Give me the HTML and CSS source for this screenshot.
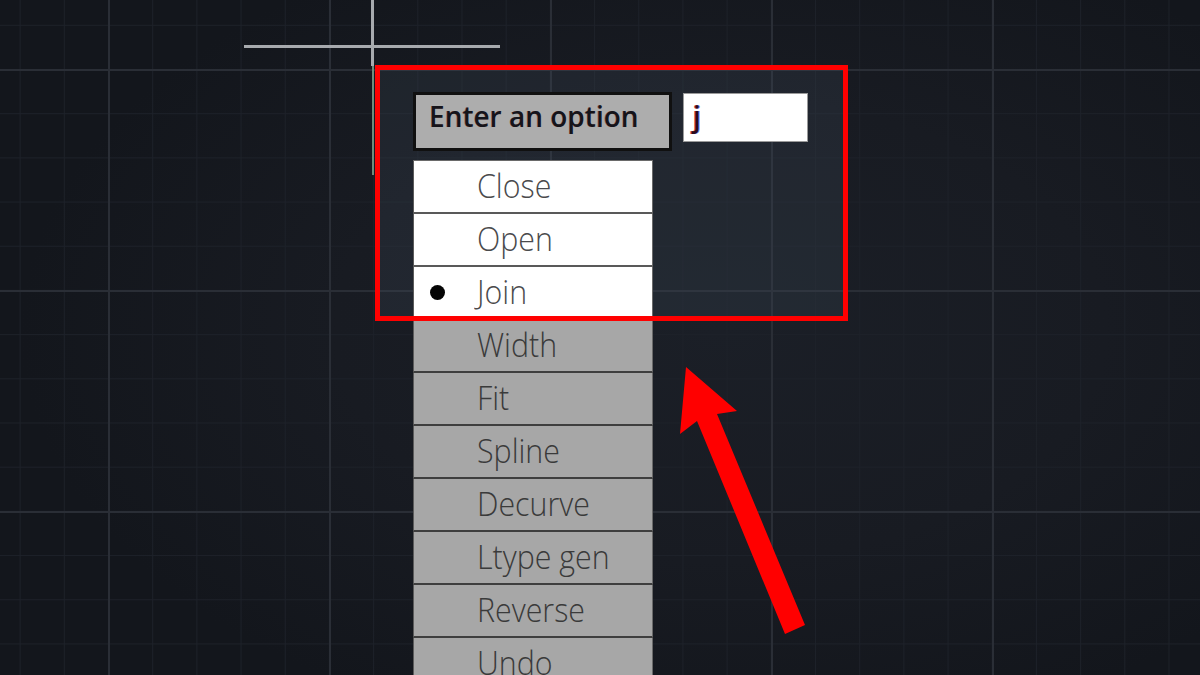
FILE: index.html
```html
<!DOCTYPE html>
<html lang="en">
<head>
<meta charset="utf-8">
<title>Enter an option</title>
<link rel="stylesheet" href="styles.css">
</head>
<body>
<div class="canvas">
  <div class="highlight-fill"></div>
  <div class="cross-h"></div>
  <div class="cross-v"></div>
  <div class="cross-v-low"></div>

  <div class="prompt">
    <div class="prompt-row">
      <div class="label">Enter an option</div>
      <div class="input"><span class="typed">j</span></div>
    </div>
    <ul class="menu">
      <li class="item light"><span class="mark"></span><span class="txt">Close</span></li>
      <li class="item light"><span class="mark"></span><span class="txt">Open</span></li>
      <li class="item light"><span class="mark on"></span><span class="txt">Join</span></li>
      <li class="item"><span class="mark"></span><span class="txt">Width</span></li>
      <li class="item"><span class="mark"></span><span class="txt">Fit</span></li>
      <li class="item"><span class="mark"></span><span class="txt">Spline</span></li>
      <li class="item"><span class="mark"></span><span class="txt">Decurve</span></li>
      <li class="item"><span class="mark"></span><span class="txt">Ltype gen</span></li>
      <li class="item"><span class="mark"></span><span class="txt">Reverse</span></li>
      <li class="item"><span class="mark"></span><span class="txt">Undo</span></li>
    </ul>
  </div>

  <div class="highlight"></div>

  <svg class="arrow" width="1200" height="675" viewBox="0 0 1200 675" aria-hidden="true">
    <polygon points="686,367 737,411 717,414 805,625 785,634 697,421 680,434" fill="#ff0000"/>
  </svg>
</div>
</body>
</html>
```

FILE: styles.css
```css
html, body {
  margin: 0;
  padding: 0;
  background: #171a21;
}

.canvas {
  position: relative;
  width: 1200px;
  height: 675px;
  overflow: hidden;
  font-family: "Open Sans", "Noto Sans", sans-serif;
  background-color: #171a21;
  background-image:
    linear-gradient(to right, #2a2e36 0, #2a2e36 2px, transparent 2px),
    linear-gradient(to bottom, #2a2e36 0, #2a2e36 2px, transparent 2px),
    linear-gradient(to right, #1d2129 0, #1d2129 1px, transparent 1px),
    linear-gradient(to bottom, #1d2129 0, #1d2129 1px, transparent 1px),
    radial-gradient(ellipse 700px 420px at 720px 330px, #1b1f27 0%, #181b22 55%, #13161c 100%);
  background-size:
    221px 100%,
    100% 221px,
    44.2px 100%,
    100% 44.2px,
    100% 100%;
  background-position:
    108px 0,
    0 69px,
    108px 0,
    0 69px,
    0 0;
}

/* crosshair cursor */
.cross-h {
  position: absolute;
  left: 244px;
  top: 45px;
  width: 256px;
  height: 3px;
  background: #a7aaae;
}
.cross-v {
  position: absolute;
  left: 371px;
  top: 0;
  width: 3px;
  height: 66px;
  background: #a7aaae;
}
.cross-v-low {
  position: absolute;
  left: 372px;
  top: 66px;
  width: 2px;
  height: 109px;
  background: #6e8c7c;
}

/* command prompt */
.prompt {
  position: absolute;
  left: 413px;
  top: 92px;
  display: flex;
  flex-direction: column;
}

.prompt-row {
  display: flex;
  align-items: flex-start;
  gap: 11px;
}

.label {
  box-sizing: border-box;
  width: 259px;
  height: 59px;
  border: 3px solid #101010;
  background: #adadad;
  padding: 2px 0 0 13px;
  font-size: 28px;
  font-weight: 600;
  line-height: 38px;
  color: #15141a;
  text-shadow: -0.6px 0 rgba(150, 20, 20, 0.35);
  white-space: nowrap;
}

.input {
  box-sizing: border-box;
  margin-top: 1px;
  width: 125px;
  height: 49px;
  background: #ffffff;
  border: 1px solid #9a9a9a;
  padding: 0 0 0 9px;
  font-size: 28px;
  font-weight: 600;
  line-height: 44px;
}

.typed {
  color: #2a0c1c;
  text-shadow: -1px 0 rgba(200, 0, 0, 0.7), 1px 0 rgba(0, 40, 200, 0.5);
}

.menu {
  list-style: none;
  margin: 9px 0 0 0;
  padding: 0;
  width: 240px;
  border-top: 1px solid #6a6a6a;
}

.item {
  box-sizing: content-box;
  height: 51px;
  display: flex;
  align-items: center;
  padding-left: 16px;
  background: #a7a7a7;
  border-left: 1px solid #5b5b5b;
  border-right: 1px solid #6a6a6a;
  border-bottom: 2px solid #3e3e3e;
  color: #3a3a3a;
}

.item.light {
  background: #ffffff;
  color: #4a4a4c;
  border-bottom-color: #595959;
}

.mark {
  flex: none;
  width: 15px;
  height: 15px;
  margin-right: 32px;
  border-radius: 50%;
}

.mark.on {
  background: #050505;
}

.txt {
  display: inline-block;
  font-size: 33px;
  font-weight: 300;
  line-height: 45px;
  margin-top: -2px;
  transform: scaleX(0.92);
  transform-origin: left center;
  white-space: nowrap;
}

/* red annotation */
.highlight-fill {
  position: absolute;
  left: 375px;
  top: 65px;
  width: 473px;
  height: 256px;
  background: rgba(70, 85, 100, 0.2);
}

.highlight {
  position: absolute;
  left: 375px;
  top: 65px;
  box-sizing: border-box;
  width: 473px;
  height: 256px;
  border: 5px solid #ff0000;
  pointer-events: none;
}

.arrow {
  position: absolute;
  left: 0;
  top: 0;
  pointer-events: none;
}
```
